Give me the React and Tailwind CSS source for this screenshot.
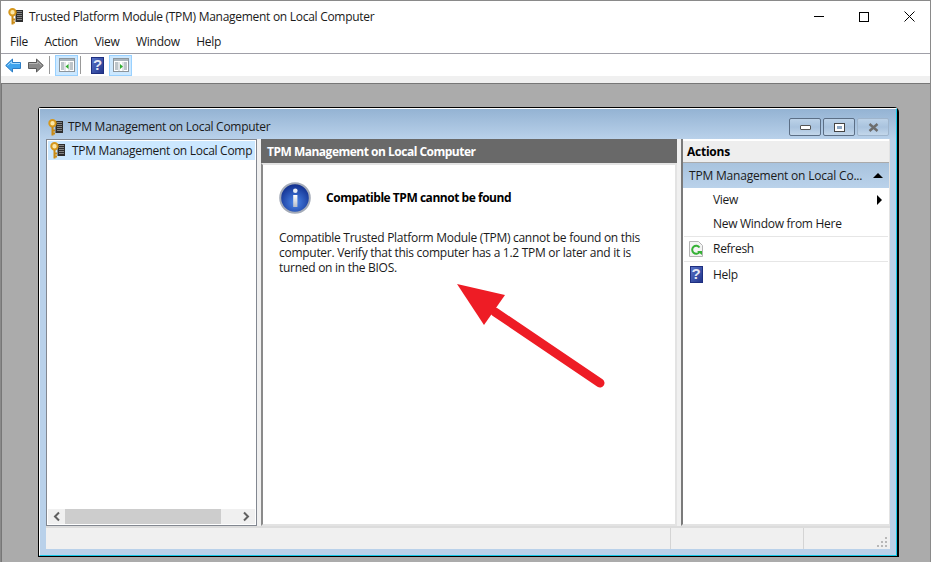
import React from "react";

const KeyChip = () => (
  <svg className="shrink-0" width="16" height="17" viewBox="0 0 16 17">
    <rect x="7.5" y="2" width="7.5" height="12" fill="#2e2e2e" />
    <path d="M9 3.5h5M9 5.5h5M9 7.5h5M9 9.5h5M9 11.5h5" stroke="#9a9a9a" strokeWidth="0.8" />
    <circle cx="4.5" cy="4.2" r="3.2" fill="#fbe7a8" stroke="#d6971c" strokeWidth="2" />
    <path d="M4.5 8v8.5M4.5 11.5h2.5M4.5 14.5h2.5" stroke="#c98a14" strokeWidth="2" />
  </svg>
);

const BackIcon = ({ flip }) => (
  <svg width="16" height="15" viewBox="0 0 16 15" className={flip ? "-scale-x-100" : ""}>
    <path
      d="M.7 7.5 7.5 1v3.5h8v6h-8V14z"
      fill={flip ? "#8a8a8a" : "#3fa4ee"}
      stroke={flip ? "#5a5a5a" : "#2b7cc4"}
    />
    <path d="M2.5 7.5 6.5 3.7v1.8H15" fill="none" stroke={flip ? "#b5b5b5" : "#a8dcff"} />
  </svg>
);

const PaneIcon = ({ right }) => (
  <svg width="16" height="14" viewBox="0 0 16 14">
    <rect x="0.5" y="0.5" width="15" height="13" fill="#fff" stroke="#8c959c" />
    <rect x="1" y="1" width="14" height="2" fill="#a9b4bc" />
    <path d="M2 5h3M2 7h3M2 9h3M2 11h3M11 5h3M11 7h3M11 9h3M11 11h3" stroke="#7d8b96" />
    <path d="M6 4v9M10 4v9" stroke="#c3cad0" />
    {right ? <path d="M7 6v5l3-2.5z" fill="#2fae2f" /> : <path d="M9.5 6v5l-3-2.5z" fill="#2fae2f" />}
  </svg>
);

const HelpIcon = () => (
  <div className="flex h-[17px] w-[13px] items-center justify-center border border-[#1e2f80] bg-gradient-to-br from-[#5a74c8] to-[#23358c] font-['Liberation_Sans',sans-serif] text-[15px] font-bold text-[#e4e8f4]">
    ?
  </div>
);

const RefreshIcon = () => (
  <svg width="14" height="16" viewBox="0 0 14 16">
    <path d="M.5.5h9l4 4v11H.5z" fill="#f4f4f4" stroke="#b4b4b4" />
    <path d="M10.5 6.5A4 4 0 1 0 10.5 11" fill="none" stroke="#35b135" strokeWidth="2" />
    <path d="M8 10h5v4z" fill="#35b135" />
  </svg>
);

const WinButton = ({ children, dim }) => (
  <div
    className={`flex h-[18px] w-[32px] items-center justify-center rounded-[2px] border bg-gradient-to-b from-[#bcd2e8] via-[#a9c3de] to-[#c3d7ea] ${
      dim ? "border-[#9fb5cc]" : "border-[#5c6f86]"
    }`}
  >
    {children}
  </div>
);

function TitleBar() {
  return (
    <div className="flex h-[29px] items-center pl-[7px] pt-[2px]">
      <KeyChip />
      <span className="ml-[5px] text-[#1a1a1a]">Trusted Platform Module (TPM) Management on Local Computer</span>
      <div className="ml-auto flex items-center gap-[35px] pr-[15px]">
        <div className="h-px w-[10px] bg-black" />
        <div className="h-[10px] w-[10px] border border-black" />
        <svg width="11" height="11" viewBox="0 0 11 11">
          <path d="M.5.5l10 10M10.5.5l-10 10" stroke="#000" />
        </svg>
      </div>
    </div>
  );
}

function MenuBar() {
  return (
    <div className="flex h-[24px] items-center gap-[16.5px] border-b border-[#a0a0a8] pl-[9px] text-[#1a1a1a]">
      {["File", "Action", "View", "Window", "Help"].map((m) => (
        <span key={m}>{m}</span>
      ))}
    </div>
  );
}

function ToolBar() {
  return (
    <div className="flex h-[22px] items-center pl-[4px]">
      <BackIcon />
      <div className="ml-[7px]">
        <BackIcon flip />
      </div>
      <div className="ml-[5px] mr-[5px] h-[18px] w-px bg-[#999]" />
      <div className="flex h-[21px] w-[23px] items-center justify-center border border-[#99d1ff] bg-[#cce8ff]">
        <PaneIcon />
      </div>
      <div className="mx-[2px] h-[18px] w-px bg-[#999]" />
      <div className="ml-[8px] mr-[5px]">
        <HelpIcon />
      </div>
      <div className="flex h-[21px] w-[23px] items-center justify-center border border-[#99d1ff] bg-[#cce8ff]">
        <PaneIcon right />
      </div>
    </div>
  );
}

function LeftPane() {
  return (
    <div className="flex w-[211px] flex-col border border-[#828790] bg-white">
      <div className="m-[1px] flex h-[19px] items-center overflow-hidden whitespace-nowrap bg-[#cce8ff] pl-[2px] text-[#1a1a1a]">
        <KeyChip />
        <span className="ml-[6px]">TPM Management on Local Comp</span>
      </div>
      <div className="flex-1" />
      <div className="mx-[1px] mb-[1px] flex h-[15px] items-center bg-[#f0f0f0]">
        <svg className="shrink-0" width="17" height="15" viewBox="0 0 17 15">
          <path d="M11 3.5 7 7.5l4 4" fill="none" stroke="#606060" strokeWidth="2" />
        </svg>
        <div className="h-full w-[156px] bg-[#cdcdcd]" />
        <svg className="ml-auto shrink-0" width="17" height="15" viewBox="0 0 17 15">
          <path d="m6 3.5 4 4-4 4" fill="none" stroke="#606060" strokeWidth="2" />
        </svg>
      </div>
    </div>
  );
}

function InfoIcon() {
  return (
    <svg width="32" height="32" viewBox="0 0 32 32">
      <defs>
        <radialGradient id="infoBlue" cx="50%" cy="65%" r="60%">
          <stop offset="0%" stopColor="#4a86ea" />
          <stop offset="100%" stopColor="#12308f" />
        </radialGradient>
        <linearGradient id="infoI" x1="0" y1="0" x2="0" y2="1">
          <stop offset="0%" stopColor="#ffffff" />
          <stop offset="100%" stopColor="#b4bcc8" />
        </linearGradient>
      </defs>
      <circle cx="16" cy="16" r="14.8" fill="url(#infoBlue)" stroke="#a4abb8" strokeWidth="2" />
      <circle cx="16.3" cy="8.8" r="2.3" fill="#e8edf5" />
      <path d="M14.2 13h4.2v12h-4.2z" fill="url(#infoI)" />
    </svg>
  );
}

function CenterPane() {
  return (
    <div className="flex w-[416px] flex-col">
      <div className="flex h-[24px] items-center bg-[#696969] pl-[6px] pt-[1px] font-bold tracking-[-0.5px] text-white">
        TPM Management on Local Computer
      </div>
      <div className="flex flex-1 flex-col border-2 border-[#e3e3e3] border-l-[#8a8a8a] bg-white pl-[16px] pt-[17px] text-[#1a1a1a]">
        <div className="flex items-center">
          <InfoIcon />
          <span className="ml-[15px] font-bold tracking-[-0.47px] text-black">Compatible TPM cannot be found</span>
        </div>
        <p className="mt-[16px] w-[380px] leading-[15px]">
          Compatible Trusted Platform Module (TPM) cannot be found on this computer. Verify that this computer has a 1.2 TPM or later and it is turned on in the BIOS.
        </p>
      </div>
    </div>
  );
}

const ActionRow = ({ icon, label, arrow, line, short }) => (
  <div className={`mx-[1px] flex items-center ${short ? "h-[24px]" : "h-[25px]"} ${line ? "border-b border-[#e6e6e6]" : ""}`}>
    <div className="flex w-[24px] justify-center">{icon}</div>
    <span className="ml-[5px]">{label}</span>
    {arrow && <div className="ml-auto mr-[6px] h-0 w-0 border-y-[5px] border-l-[5px] border-y-transparent border-l-black" />}
  </div>
);

function ActionsPane() {
  return (
    <div className="flex w-[209px] flex-col border-b-2 border-l-2 border-r border-b-[#e3e3e3] border-l-[#7a7a7a] border-r-[#e3e3e3] bg-white text-[#1a1a1a]">
      <div className="mt-[2px] flex h-[22px] items-center border-b border-[#aaa] bg-[#eeeeee] pl-[4px] font-bold tracking-[-0.25px] text-black">
        Actions
      </div>
      <div className="flex h-[25px] items-center bg-gradient-to-b from-[#a8c3de] to-[#bad2ea] pl-[6px] pr-[6px]">
        <span className="tracking-[-0.2px]">TPM Management on Local Co...</span>
        <div className="ml-auto h-0 w-0 border-x-[5px] border-b-[5px] border-x-transparent border-b-black" />
      </div>
      <ActionRow short label="View" arrow />
      <ActionRow label="New Window from Here" line />
      <ActionRow label="Refresh" line icon={<RefreshIcon />} />
      <ActionRow label="Help" icon={<HelpIcon />} />
    </div>
  );
}

function StatusBar() {
  return (
    <div className="flex h-[23px] border-t-2 border-[#dcdcdc] bg-[#f0f0f0]">
      <div className="w-[625px] border-r border-[#d4d4d4]" />
      <div className="w-[133px] border-r border-[#d4d4d4]" />
      <div className="flex flex-1 items-end justify-end pb-[2px] pr-[3px]">
        <svg width="10" height="10" viewBox="0 0 10 10">
          <path d="M8 0h2v2H8zM4 4h2v2H4zM8 4h2v2H8zM0 8h2v2H0zM4 8h2v2H4zM8 8h2v2H8z" fill="#b8b8b8" />
        </svg>
      </div>
    </div>
  );
}

function ChildWindow() {
  return (
    <div className="flex h-[450px] w-[861px] flex-col rounded-tl-[3px] rounded-tr-[5px] border-b border-l border-r-2 border-t border-black bg-[#b9d1ea]">
      <div className="flex flex-1 flex-col border border-b-[#14c8e8] border-l-white border-r-[#14c8e8] border-t-white px-[6px] pb-[6px]">
        <div className="-mx-[6px] flex h-[30px] shrink-0 items-center bg-gradient-to-b from-[#94b3d3] to-[#b9d1ea] pl-[8px] pr-[7px] pt-[6px]">
          <KeyChip />
          <span className="ml-[4px] text-[#1a1a1a]">TPM Management on Local Computer</span>
          <div className="ml-auto flex gap-[2px]">
            <WinButton>
              <div className="h-[5px] w-[11px] rounded-[1px] border border-[#555] bg-white" />
            </WinButton>
            <WinButton>
              <div className="flex h-[9px] w-[11px] items-center justify-center border border-[#444] bg-white">
                <div className="h-[3px] w-[5px] bg-[#8fa8c4]" />
              </div>
            </WinButton>
            <WinButton dim>
              <svg width="11" height="9" viewBox="0 0 11 9">
                <path d="M1.5 1l8 7M9.5 1l-8 7" stroke="#6d6d6d" strokeWidth="2.4" />
              </svg>
            </WinButton>
          </div>
        </div>
        <div className="flex h-[387px] bg-[#f0f0f0]">
          <LeftPane />
          <div className="w-[4px]" />
          <CenterPane />
          <div className="w-[4px]" />
          <ActionsPane />
        </div>
        <StatusBar />
      </div>
    </div>
  );
}

export default function App() {
  return (
    <div className="relative flex h-[562px] w-[931px] flex-col overflow-hidden border-l border-r border-t border-[#8a8a8a] bg-white font-['Open_Sans',sans-serif] text-[12px] tracking-[-0.28px]">
      <TitleBar />
      <MenuBar />
      <ToolBar />
      <div className="h-[7px] bg-[#f0f0f0]" />
      <div className="flex-1 border-l border-t border-[#777] bg-[#ababab] pl-[36px] pt-[23px]">
        <ChildWindow />
      </div>
      {/* red arrow pasted on top of the screenshot */}
      <svg className="absolute left-[-1px] top-[-1px]" width="931" height="562" viewBox="0 0 931 562">
        <path d="M495 312 600 383" stroke="#ee1c25" strokeWidth="9" strokeLinecap="round" />
        <path d="M457 284 505 295 484 325z" fill="#ee1c25" />
      </svg>
    </div>
  );
}
